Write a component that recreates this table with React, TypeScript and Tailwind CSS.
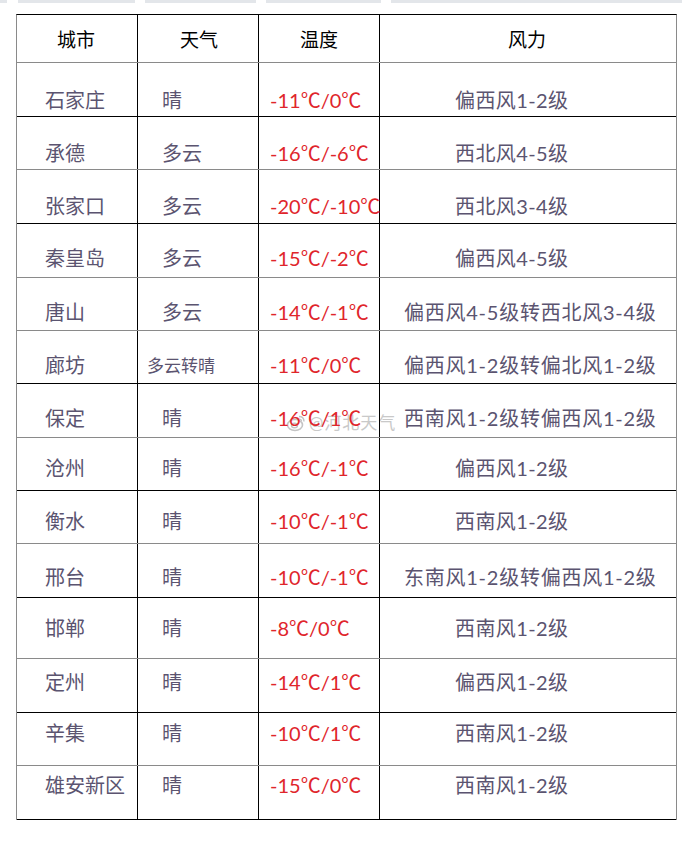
import React from "react";

type Row = {
  city: string;
  weather: string;
  temp: string;
  wind: string;
  h: string;
  pt: string;
  line: string;
  small?: boolean;
  longWind?: boolean;
};

const rows: Row[] = [
  { city: "石家庄", weather: "晴", temp: "-11℃/0℃", wind: "偏西风1-2级", h: "h-[54px]", pt: "pt-[25px]", line: "border-black" },
  { city: "承德", weather: "多云", temp: "-16℃/-6℃", wind: "西北风4-5级", h: "h-[53px]", pt: "pt-[24px]", line: "border-[#8a8a8a]" },
  { city: "张家口", weather: "多云", temp: "-20℃/-10℃", wind: "西北风3-4级", h: "h-[54px]", pt: "pt-[24px]", line: "border-black" },
  { city: "秦皇岛", weather: "多云", temp: "-15℃/-2℃", wind: "偏西风4-5级", h: "h-[54px]", pt: "pt-[22px]", line: "border-[#8a8a8a]" },
  { city: "唐山", weather: "多云", temp: "-14℃/-1℃", wind: "偏西风4-5级转西北风3-4级", h: "h-[53px]", pt: "pt-[22px]", line: "border-[#8a8a8a]", longWind: true },
  { city: "廊坊", weather: "多云转晴", temp: "-11℃/0℃", wind: "偏西风1-2级转偏北风1-2级", h: "h-[53px]", pt: "pt-[22px]", line: "border-black", small: true, longWind: true },
  { city: "保定", weather: "晴", temp: "-16℃/1℃", wind: "西南风1-2级转偏西风1-2级", h: "h-[54px]", pt: "pt-[22px]", line: "border-[#8a8a8a]", longWind: true },
  { city: "沧州", weather: "晴", temp: "-16℃/-1℃", wind: "偏西风1-2级", h: "h-[53px]", pt: "pt-[18px]", line: "border-black" },
  { city: "衡水", weather: "晴", temp: "-10℃/-1℃", wind: "西南风1-2级", h: "h-[53px]", pt: "pt-[18px]", line: "border-[#8a8a8a]" },
  { city: "邢台", weather: "晴", temp: "-10℃/-1℃", wind: "东南风1-2级转偏西风1-2级", h: "h-[54px]", pt: "pt-[21px]", line: "border-black", longWind: true },
  { city: "邯郸", weather: "晴", temp: "-8℃/0℃", wind: "西南风1-2级", h: "h-[61px]", pt: "pt-[18px]", line: "border-[#8a8a8a]" },
  { city: "定州", weather: "晴", temp: "-14℃/1℃", wind: "偏西风1-2级", h: "h-[54px]", pt: "pt-[11px]", line: "border-black" },
  { city: "辛集", weather: "晴", temp: "-10℃/1℃", wind: "西南风1-2级", h: "h-[53px]", pt: "pt-[8px]", line: "border-[#8a8a8a]" },
  { city: "雄安新区", weather: "晴", temp: "-15℃/0℃", wind: "西南风1-2级", h: "h-[54px]", pt: "pt-[7px]", line: "border-black" },
];

function Watermark() {
  return (
    <div className="absolute left-[286px] top-[413px] flex items-center gap-[3px] text-[#c9c9c9] pointer-events-none">
      <svg width="20" height="18" viewBox="0 0 20 18" fill="none">
        <ellipse cx="9" cy="11" rx="7.5" ry="5.5" stroke="#c4c4c4" strokeWidth="1.6" />
        <ellipse cx="8.5" cy="11.5" rx="3" ry="2.3" stroke="#c4c4c4" strokeWidth="1.4" />
        <path d="M13 2.5 C16 2.5 18 4.5 18 7.5" stroke="#c4c4c4" strokeWidth="1.4" />
        <path d="M13 5 C14.5 5 15.6 6 15.6 7.5" stroke="#c4c4c4" strokeWidth="1.2" />
      </svg>
      <span className="text-[17px] leading-[20px] tracking-[1px]">@河北天气</span>
    </div>
  );
}

export default function App() {
  return (
    <div
      className="relative w-[690px] h-[842px] bg-white overflow-hidden"
      style={{ fontFamily: '"Lato", "Noto Sans CJK SC", sans-serif' }}
    >
      {/* faint tab strip at the very top */}
      <div className="flex h-[3px] gap-[10px]">
        <div className="w-[7px] bg-[#e3e6ea]" />
        <div className="w-[117px] ml-[1px] bg-[#e3e6ea]" />
        <div className="w-[111px] bg-[#e3e6ea]" />
        <div className="w-[115px] bg-[#e3e6ea]" />
        <div className="w-[291px] bg-[#e3e6ea]" />
      </div>

      <div className="ml-[16px] mt-[11px] w-[661px] border-t border-t-black border-l border-l-[#8a8a8a] border-r border-r-[#8a8a8a]">
        {/* header */}
        <div className="flex h-[48px] border-b border-[#8a8a8a] text-[19px] leading-[24px] text-black font-normal">
          <div className="w-[121px] border-r border-black pt-[13px] pl-[40px]">城市</div>
          <div className="w-[121px] border-r border-black pt-[13px] pl-[42px]">天气</div>
          <div className="w-[121px] border-r border-black pt-[13px] pl-[41px]">温度</div>
          <div className="flex-1 pt-[13px] pl-[128px]">风力</div>
        </div>

        {rows.map((r) => (
          <div key={r.city} className={`flex ${r.h} border-b ${r.line} text-[20px] leading-[24px] text-[#5b5470]`}>
            <div className={`w-[121px] shrink-0 border-r border-black pl-[28px] ${r.pt}`}>{r.city}</div>
            <div className={`w-[121px] shrink-0 border-r border-black ${r.pt}`}>
              {r.small ? (
                <div className="pl-[9px] pt-[2px] text-[17px] leading-[22px]">{r.weather}</div>
              ) : (
                <div className="pl-[24px]">{r.weather}</div>
              )}
            </div>
            <div className={`w-[121px] shrink-0 border-r border-black pl-[11px] whitespace-nowrap text-[#e0252b] relative z-10 ${r.pt}`}>
              {r.temp}
            </div>
            <div
              className={`flex-1 whitespace-nowrap ${
                r.longWind ? "pl-[24px] tracking-[0.75px]" : "pl-[75px] tracking-[0.4px]"
              } ${r.pt}`}
            >
              {r.wind}
            </div>
          </div>
        ))}
      </div>

      <Watermark />
    </div>
  );
}
